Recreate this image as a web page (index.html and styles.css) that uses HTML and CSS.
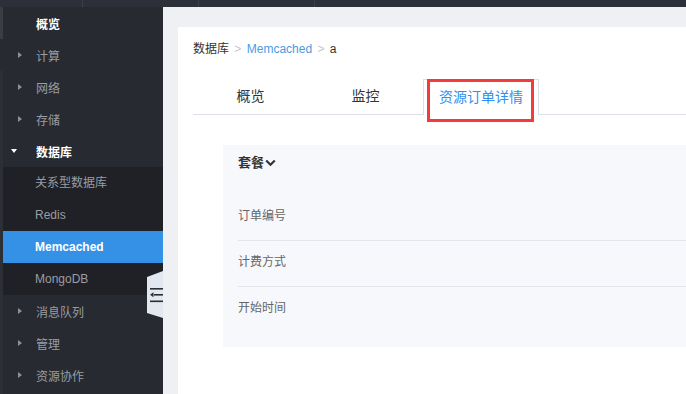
FILE: index.html
```html
<!DOCTYPE html>
<html lang="zh-CN">
<head>
    <meta charset="UTF-8">
    <title>Memcached - 资源订单详情</title>
    <link rel="stylesheet" href="styles.css">
</head>
<body>
    <div class="topbar">
        <div class="topbar-cell" style="width: 83px"></div>
        <div class="topbar-cell" style="width: 116px"></div>
        <div class="topbar-cell" style="width: 116px"></div>
    </div>

    <div class="layout">
        <div class="scroll-strip"></div>

        <div class="sidebar">
            <div class="nav-item active"><span class="arrow"></span>概览</div>
            <div class="nav-item"><span class="arrow right"></span>计算</div>
            <div class="nav-item"><span class="arrow right"></span>网络</div>
            <div class="nav-item"><span class="arrow right"></span>存储</div>
            <div class="nav-item open"><span class="arrow down"></span>数据库</div>
            <div class="submenu">
                <div class="sub-item">关系型数据库</div>
                <div class="sub-item">Redis</div>
                <div class="sub-item selected">Memcached</div>
                <div class="sub-item">MongoDB</div>
            </div>
            <div class="nav-item"><span class="arrow right"></span>消息队列</div>
            <div class="nav-item"><span class="arrow right"></span>管理</div>
            <div class="nav-item"><span class="arrow right"></span>资源协作</div>

            <div class="collapse-tab">
                <svg width="16" height="47" viewBox="0 0 16 47">
                    <polygon points="0,6 16,0 16,47 0,42" fill="#e3e7ef"/>
                    <rect x="3" y="17" width="13" height="1.6" fill="#2b2e35"/>
                    <rect x="7" y="23" width="9" height="1.6" fill="#2b2e35"/>
                    <rect x="3" y="29.5" width="13" height="1.6" fill="#2b2e35"/>
                    <polygon points="3,23.8 6.5,21.3 6.5,26.3" fill="#2b2e35"/>
                </svg>
            </div>
        </div>

        <div class="main">
            <div class="card">
                <div class="breadcrumb">
                    <span>数据库</span>
                    <span class="sep">&gt;</span>
                    <a class="crumb-link">Memcached</a>
                    <span class="sep">&gt;</span>
                    <span>a</span>
                </div>

                <div class="tabs">
                    <div class="tab">概览</div>
                    <div class="tab">监控</div>
                    <div class="tab active">资源订单详情</div>
                </div>

                <div class="panel">
                    <div class="panel-head">套餐<svg class="chevron" width="11" height="8" viewBox="0 0 11 8"><polyline points="1.2,1.5 5.5,5.8 9.8,1.5" fill="none" stroke="#333" stroke-width="2.2"/></svg></div>
                    <div class="row">订单编号</div>
                    <div class="row">计费方式</div>
                    <div class="row last">开始时间</div>
                </div>
            </div>
        </div>
    </div>

    <div class="highlight-box"></div>
</body>
</html>
```

FILE: styles.css
```css
body {
    margin: 0;
    width: 686px;
    height: 394px;
    overflow: hidden;
    font-family: "Liberation Sans", "Noto Sans CJK SC", sans-serif;
    font-size: 12px;
    background: #eff0f4;
    position: relative;
}
.topbar {
    height: 7px;
    background: #2d2f39;
    display: flex;
}
.topbar-cell {
    border-right: 1px solid #3c3f4a;
    box-sizing: border-box;
}
.layout {
    display: flex;
    height: 387px;
}
.scroll-strip {
    width: 3px;
    background: linear-gradient(#3a3d44 0 32px, #272a30 32px 64px, #2c2f36 64px);
}
.sidebar {
    width: 160px;
    background: #272a30;
    position: relative;
}
.nav-item {
    height: 32px;
    display: flex;
    align-items: center;
    color: #9a9da3;
    font-size: 12px;
}
.nav-item.active, .nav-item.open {
    color: #fff;
    font-weight: bold;
}
.arrow {
    width: 33px;
    height: 32px;
    position: relative;
    flex: none;
}
.arrow.right::before {
    content: "";
    position: absolute;
    left: 15px;
    top: 13px;
    border-left: 4px solid #8d9096;
    border-top: 3.5px solid transparent;
    border-bottom: 3.5px solid transparent;
}
.arrow.down::before {
    content: "";
    position: absolute;
    left: 8px;
    top: 14px;
    border-top: 4px solid #fff;
    border-left: 3.5px solid transparent;
    border-right: 3.5px solid transparent;
}
.submenu {
    background: #1f2126;
}
.sub-item {
    height: 32px;
    line-height: 32px;
    padding-left: 32px;
    color: #9a9da3;
}
.sub-item.selected {
    background: #3591e5;
    color: #fff;
    font-weight: bold;
}
.collapse-tab {
    position: absolute;
    right: 0;
    top: 264px;
    width: 16px;
    height: 47px;
}
.collapse-tab svg {
    display: block;
}
.main {
    flex: 1;
    background: #eff0f4;
    padding: 20px 0 0 15px;
    overflow: hidden;
}
.card {
    background: #fff;
    height: 100%;
    padding: 14px 0 0 15px;
    box-sizing: border-box;
}
.breadcrumb {
    color: #333;
    line-height: 16px;
}
.breadcrumb .sep {
    color: #c3c6cc;
    margin: 0 2px;
}
.crumb-link {
    color: #4a9be2;
}
.tabs {
    display: flex;
    margin-top: 22px;
    border-bottom: 1px solid #dcdfe6;
}
.tab {
    width: 115px;
    height: 35px;
    line-height: 35px;
    text-align: center;
    font-size: 14px;
    color: #333;
    box-sizing: border-box;
}
.tab.active {
    width: 116px;
    color: #2f8ff0;
    border: 1px solid #dcdfe6;
    border-bottom: 0;
    background: #fff;
    margin-bottom: -1px;
    height: 36px;
}
.panel {
    margin: 30px 0 0 30px;
    background: #f7f8fc;
    padding: 0 0 14px 15px;
}
.panel-head {
    height: 50px;
    padding-top: 10px;
    box-sizing: border-box;
    font-weight: bold;
    font-size: 13px;
    color: #333;
    line-height: 16px;
}
.chevron {
    vertical-align: middle;
    margin-left: 1px;
    position: relative;
    top: -1px;
}
.row {
    height: 46px;
    padding-top: 13px;
    box-sizing: border-box;
    line-height: 16px;
    color: #666;
    border-bottom: 1px solid #e3e5ec;
}
.row.last {
    border-bottom: 0;
}
.highlight-box {
    position: absolute;
    left: 427px;
    top: 79px;
    width: 101px;
    height: 37px;
    border: 3px solid #f23c3c;
}
```
